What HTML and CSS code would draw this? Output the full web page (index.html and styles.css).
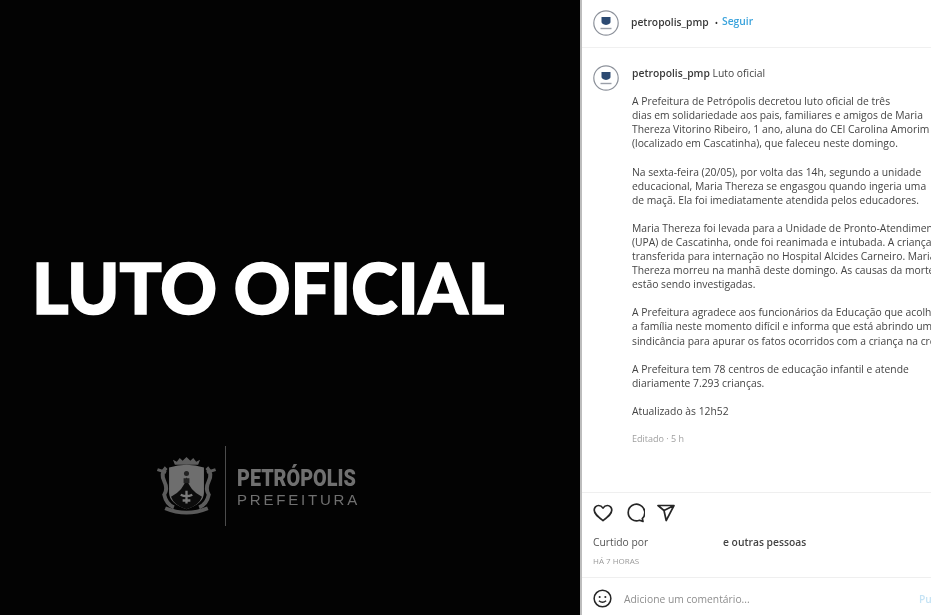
FILE: index.html
```html
<!DOCTYPE html>
<html lang="pt-BR">
<head>
<meta charset="utf-8">
<title>petropolis_pmp</title>
<link rel="stylesheet" href="styles.css">
</head>
<body>
<main class="post">
  <section class="media">
    <h1 class="headline">LUTO OFICIAL</h1>
    <div class="brand">
      <svg class="crest" viewBox="2 5 60 64" width="59" height="62" aria-hidden="true">
        <path d="M18 10l2 5h24l2-5-4 2-3-4-3 3-4-4-4 4-3-3-3 4z" fill="#5e5e5e"/>
        <path d="M14 18q18-6 36 0v26q0 11-18 17Q14 55 14 44z" fill="#6e6e6e"/>
        <path d="M32 28q3 14 16 20-3 9-16 13-13-4-16-13 13-6 16-20z" fill="#0c0c0c"/>
        <path d="M32 42v13M26 46q6 3 12 0M28 52h8" stroke="#7a7a7a" stroke-width="2.4" fill="none"/>
        <circle cx="32" cy="24" r="2.600" fill="#222"/>
        <path d="M29 29h6v5h-6z" fill="#222"/>
        <path d="M11 18q-6 6-2 14t0 14q2 10 10 13M53 18q6 6 2 14t0 14q-2 10-10 13" stroke="#5c5c5c" stroke-width="4" fill="none"/>
        <path d="M2 20l9 3M62 20l-9 3" stroke="#5c5c5c" stroke-width="3"/>
        <path d="M10 60q22 9 44 0" stroke="#5a5a5a" stroke-width="4" fill="none"/>
      </svg>
      <span class="brand-rule"></span>
      <div class="brand-text">
        <span class="brand-name">PETRÓPOLIS</span>
        <span class="brand-sub">PREFEITURA</span>
      </div>
    </div>
  </section>
  <aside class="panel">
    <header class="top">
      <svg class="avatar" viewBox="0 0 26 26" width="26" height="26" aria-hidden="true">
        <circle cx="13" cy="13" r="12.200" fill="#fff" stroke="#8d929b" stroke-width="1.200"/>
        <path d="M8.500 7h9v5q0 2-4.500 3-4.500-1-4.500-3z" fill="#2c4a72"/>
        <path d="M7.500 18.500h11" stroke="#9a9fa8" stroke-width="1.400"/>
      </svg>
      <span class="user">petropolis_pmp</span>
      <span class="dot">•</span>
      <span class="follow">Seguir</span>
    </header>
    <div class="caption">
      <svg class="avatar" viewBox="0 0 26 26" width="26" height="26" aria-hidden="true">
        <circle cx="13" cy="13" r="12.200" fill="#fff" stroke="#8d929b" stroke-width="1.200"/>
        <path d="M8.500 7h9v5q0 2-4.500 3-4.500-1-4.500-3z" fill="#2c4a72"/>
        <path d="M7.500 18.500h11" stroke="#9a9fa8" stroke-width="1.400"/>
      </svg>
      <div class="caption-body">
        <p class="title"><span class="user">petropolis_pmp</span> Luto oficial</p>
        <p>A Prefeitura de Petrópolis decretou luto oficial de três<br>dias em solidariedade aos pais, familiares e amigos de Maria<br>Thereza Vitorino Ribeiro, 1 ano, aluna do CEI Carolina Amorim<br>(localizado em Cascatinha), que faleceu neste domingo.</p>
        <p>Na sexta-feira (20/05), por volta das 14h, segundo a unidade<br>educacional, Maria Thereza se engasgou quando ingeria uma<br>de maçã. Ela foi imediatamente atendida pelos educadores.</p>
        <p>Maria Thereza foi levada para a Unidade de Pronto-Atendimento<br>(UPA) de Cascatinha, onde foi reanimada e intubada. A criança foi<br>transferida para internação no Hospital Alcides Carneiro. Maria<br>Thereza morreu na manhã deste domingo. As causas da morte<br>estão sendo investigadas.</p>
        <p>A Prefeitura agradece aos funcionários da Educação que acolheram<br>a família neste momento difícil e informa que está abrindo uma<br>sindicância para apurar os fatos ocorridos com a criança na creche.</p>
        <p>A Prefeitura tem 78 centros de educação infantil e atende<br>diariamente 7.293 crianças.</p>
        <p>Atualizado às 12h52</p>
        <p class="edited">Editado · 5 h</p>
      </div>
    </div>
    <section class="actions">
      <div class="icons">
        <svg viewBox="0 0 20 18" width="20" height="18" aria-hidden="true"><path d="M10 16.600C5 12.700 1.200 9.900 1.200 6A4.400 4.400 0 0 1 5.600 1.500c1.900 0 3.300.9 4.400 2.600 1.100-1.700 2.500-2.600 4.400-2.600A4.400 4.400 0 0 1 18.800 6c0 3.900-3.800 6.700-8.800 10.600z" fill="none" stroke="#262626" stroke-width="1.700" stroke-linejoin="round"/></svg>
        <svg viewBox="0 0 20 20" width="20" height="20" aria-hidden="true"><path d="M17.300 15.500A8.300 8.300 0 1 0 14.500 17.300L18 18.400z" fill="none" stroke="#262626" stroke-width="1.700" stroke-linejoin="round"/></svg>
        <svg viewBox="0 0 18 18" width="18" height="18" aria-hidden="true"><path d="M1 1.500h16L9.200 16.500 7 6.500zM7 6.500L17 1.500" fill="none" stroke="#262626" stroke-width="1.700" stroke-linejoin="round"/></svg>
      </div>
      <p class="likes"><span>Curtido por</span><b>e outras pessoas</b></p>
      <p class="time">HÁ 7 HORAS</p>
    </section>
    <footer class="comment">
      <svg viewBox="0 0 20 20" width="19" height="19" aria-hidden="true"><circle cx="10" cy="10" r="8.800" fill="none" stroke="#262626" stroke-width="1.600"/><circle cx="7" cy="8.500" r="1.100" fill="#262626"/><circle cx="13" cy="8.500" r="1.100" fill="#262626"/><path d="M6.200 12.300q3.800 3.400 7.600 0" fill="none" stroke="#262626" stroke-width="1.400"/></svg>
      <span class="placeholder">Adicione um comentário...</span>
      <span class="publish">Publicar</span>
    </footer>
  </aside>
</main>
</body>
</html>
```
FILE: styles.css
```css
* { box-sizing: border-box; }
html, body { margin: 0; height: 100%; overflow: hidden; }
body { font-family: "Open Sans", "Liberation Sans", sans-serif; background: #fff; color: #444; }
p, h1 { margin: 0; }

.post { display: flex; width: 931px; height: 615px; filter: blur(0.4px); }

.media {
  width: 580px; flex: none; background: #030303;
  display: flex; flex-direction: column; align-items: flex-start;
  padding: 250px 0 0 32px;
}
.headline {
  font-family: Lato, Inter, "Liberation Sans", sans-serif;
  font-weight: 900; font-size: 70px; line-height: 74px;
  letter-spacing: 0; color: #fff; white-space: nowrap;
  -webkit-text-stroke: 1.600px #fff;
}
.brand { display: flex; align-items: center; margin: 122px 0 0 125px; height: 80px; }
.crest { flex: none; }
.brand-rule { width: 1px; height: 80px; background: #4c4c4c; margin: 0 11px 0 9px; }
.brand-text { display: flex; flex-direction: column; color: #707070; padding-top: 3px; }
.brand-name { font-family: Roboto, "Liberation Sans", sans-serif; font-weight: 900; font-size: 23px; line-height: 24px; transform-origin: left; transform: scaleX(0.86); white-space: nowrap; width: 119px; }
.brand-sub { font-family: "Liberation Sans", sans-serif; font-size: 15px; line-height: 17px; letter-spacing: 2.800px; }

.panel {
  flex: 1; min-width: 0; background: #fff; border-left: 2px solid #bdbdbd;
  display: flex; flex-direction: column; overflow: hidden;
}
.top { height: 48px; flex: none; display: flex; align-items: center; padding: 0 0 3px 11px; border-bottom: 1px solid #f0f0f0; font-size: 10.300px; }
.top .avatar { margin: 1px 12px 0 0; }
.user { font-weight: 600; color: #3a3a3a; }
.dot { margin: 0 4px 0 6px; font-size: 9px; color: #333; }
.follow { color: #3aa3dc; font-weight: 600; margin-top: -3px; }

.caption { height: 445px; flex: none; display: flex; align-items: flex-start; padding: 17px 0 0 11px; border-bottom: 1px solid #efefef; overflow: hidden; }
.caption .avatar { flex: none; margin-right: 13px; }
.caption-body { font-size: 10.340px; line-height: 14.100px; white-space: nowrap; padding-top: 1px; }
.caption-body p { margin-bottom: 14.050px; }
.caption-body .title { margin: 0 0 14px; }
.caption-body .edited { font-size: 9px; color: #a0a0a0; margin-top: 5px; }

.actions { flex: 1; padding: 9px 0 0 11px; }
.icons { display: flex; align-items: center; gap: 12px; height: 22px; }
.likes { display: flex; font-size: 10.300px; line-height: 14px; margin-top: 11px; color: #555; }
.likes span { width: 130px; }
.likes b { font-weight: 600; color: #444; }
.time { font-size: 8px; color: #9a9a9a; line-height: 10px; margin-top: 7px; }

.comment { height: 38px; flex: none; display: flex; align-items: center; padding: 4px 0 0 11px; border-top: 1px solid #efefef; font-size: 10.300px; white-space: nowrap; }
.comment svg { flex: none; }
.placeholder { margin-left: 12px; color: #8e8e8e; width: 295px; flex: none; }
.publish { color: #c5e3f5; font-weight: 600; }
```
